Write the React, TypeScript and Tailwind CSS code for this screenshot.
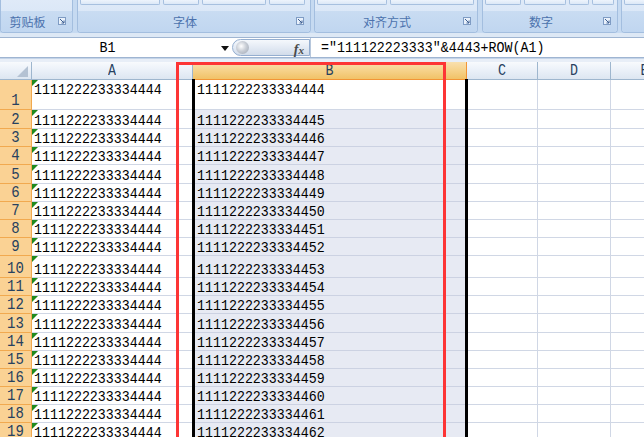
import React from "react";

const rowHeights = [30, 19, 18, 18, 19, 18, 18, 18, 18, 22, 18, 18, 19, 18, 18, 18, 18, 18, 18];

function Launcher() {
  return (
    <svg width="8" height="8" viewBox="0 0 8 8" className="shrink-0">
      <rect x="0.5" y="0.5" width="7" height="7" fill="#e9f1fb" stroke="#7f9cc4" />
      <path d="M2 2 L6 6 M6 3.5 L6 6 L3.5 6" stroke="#3c5f92" strokeWidth="1" fill="none" />
    </svg>
  );
}

function Btn({ w }: { w: number }) {
  return (
    <div
      className="h-[5px] rounded-b-[2px] border-x border-b border-[#a7c0df] bg-gradient-to-b from-[#eef4fc] to-[#dce8f7]"
      style={{ width: w }}
    />
  );
}

function Group({
  className,
  label,
  buttons,
}: {
  className: string;
  label: string;
  buttons: number[];
}) {
  return (
    <div className={"flex h-[33px] shrink-0 flex-col rounded-b-[4px] border-x border-b border-[#a3bedf] bg-gradient-to-b from-[#dfeaf8] to-[#d5e4f6] " + className}>
      <div className="flex h-[11px] gap-[3px] px-[2px]">
        {buttons.map((w, i) => (
          <Btn key={i} w={w} />
        ))}
      </div>
      <div className="relative flex flex-1 items-center justify-center rounded-b-[3px] bg-gradient-to-b from-[#c9dcf2] to-[#c0d6f0] pr-[18px]">
        <span className="font-['Noto_Sans_CJK_SC',sans-serif] text-[12px] leading-none text-[#4b72ad]">{label}</span>
        <div className="absolute right-[6px] top-[6px]">
          <Launcher />
        </div>
      </div>
    </div>
  );
}

function Ribbon() {
  return (
    <div className="flex h-[33px] bg-[#c6daf1]">
      <Group className="w-[73px]" label="剪贴板" buttons={[]} />
      <Group className="ml-[4px] w-[234px]" label="字体" buttons={[80, 36, 64, 36]} />
      <Group className="ml-[3px] w-[164px]" label="对齐方式" buttons={[70, 84]} />
      <Group className="ml-[4px] w-[136px]" label="数字" buttons={[36, 42, 20, 22]} />
      <Group className="ml-[3px] w-[60px]" label="" buttons={[40]} />
    </div>
  );
}

function FormulaBar() {
  return (
    <div className="flex h-[21px] border-y border-[#9fb5d2] bg-white">
      <div className="flex w-[232px] shrink-0 items-center">
        <div className="flex w-[215px] justify-center text-[13.3px] leading-[13px] text-black">
          <span className="inline-block scale-y-115">B1</span>
        </div>
        <svg width="8" height="5" viewBox="0 0 8 5" className="ml-[6px] mt-[1px]">
          <path d="M0 0 L8 0 L4 5 Z" fill="#111" />
        </svg>
      </div>
      <div className="relative my-[1px] flex w-[78px] shrink-0 items-center rounded-l-full border border-[#94aed0] bg-gradient-to-b from-[#f5f8fc] via-[#e3eaf4] to-[#d2dcea]">
        <div className="ml-[3px] h-[13px] w-[13px] rounded-full bg-[radial-gradient(circle_at_40%_40%,#ffffff_0%,#c9ced6_45%,#9aa3b0_100%)]" />
        <span className="absolute right-[5px] top-[-1px] font-['Liberation_Serif',serif] text-[14px] font-bold italic text-[#4a4a4a]">
          f<span className="text-[11px]">x</span>
        </span>
      </div>
      <div className="flex flex-1 items-center border-l border-[#b7c7dc] pl-[10px] text-[13.3px] leading-[13px] text-black">
        <span className="inline-block scale-y-115 whitespace-pre">="111122223333"&4443+ROW(A1)</span>
      </div>
    </div>
  );
}

function HeaderRow() {
  const normal =
    "flex shrink-0 items-center justify-center border-r border-b border-[#9eb6ce] bg-gradient-to-b from-[#f8fafd] via-[#eaf0f8] to-[#dde6f1] text-[#27415f]";
  return (
    <div className="flex h-[18px]">
      <div className={"relative w-[32px] " + normal}>
        <svg width="11" height="11" viewBox="0 0 11 11" className="absolute right-[3px] bottom-[2px]">
          <path d="M11 0 L11 11 L0 11 Z" fill="#b4c2d3" />
        </svg>
      </div>
      <div className={"w-[161px] " + normal}>
        <span className="inline-block scale-y-120 text-[13.3px] leading-[13px]">A</span>
      </div>
      <div className="flex w-[274px] shrink-0 items-center justify-center border-r border-b border-[#f29536] bg-gradient-to-b from-[#f9e0ae] via-[#f6d28a] to-[#f1c266] text-[#27415f]">
        <span className="inline-block scale-y-120 text-[13.3px] leading-[13px]">B</span>
      </div>
      <div className={"w-[71px] " + normal}>
        <span className="inline-block scale-y-120 text-[13.3px] leading-[13px]">C</span>
      </div>
      <div className={"w-[73px] " + normal}>
        <span className="inline-block scale-y-120 text-[13.3px] leading-[13px]">D</span>
      </div>
      <div className={"w-[68px] " + normal}>
        <span className="inline-block scale-y-120 text-[13.3px] leading-[13px]">E</span>
      </div>
    </div>
  );
}

function DataRow({ h, idx }: { h: number; idx: number }) {
  const first = idx === 0;
  const align = first ? "items-start pt-[4px]" : "items-end";
  const bVal = (1111222233334444 + idx).toString();
  return (
    <div className="flex" style={{ height: h }}>
      <div className="flex w-[32px] shrink-0 items-end justify-center border-r border-b border-[#f1a94f] bg-[#fad294] text-[#27415f]">
        <span className="inline-block origin-bottom scale-y-120 text-[14px] leading-[14px]">{idx + 1}</span>
      </div>
      <div className={"relative flex w-[161px] shrink-0 border-r border-b border-[#d0d7e5] pl-[2px] text-black " + align}>
        <svg width="6" height="6" viewBox="0 0 6 6" className="absolute left-0 top-0">
          <path d="M0 0 L6 0 L0 6 Z" fill="#1f8a1f" />
        </svg>
        <span className="inline-block origin-bottom scale-y-115 text-[13.3px] leading-[13px]">1111222233334444</span>
      </div>
      <div
        className={
          "flex w-[274px] shrink-0 border-r border-b pl-[4px] text-black " +
          align +
          (first ? " border-[#d0d7e5] bg-white" : " border-[#ccd2e2] bg-[#e7eaf3]")
        }
      >
        <span className="inline-block origin-bottom scale-y-115 text-[13.3px] leading-[13px]">{bVal}</span>
      </div>
      <div className="w-[71px] shrink-0 border-r border-b border-[#d0d7e5]" />
      <div className="w-[73px] shrink-0 border-r border-b border-[#d0d7e5]" />
      <div className="w-[68px] shrink-0 border-r border-b border-[#d0d7e5]" />
    </div>
  );
}

export default function App() {
  return (
    <div className="relative h-[437px] w-[644px] overflow-hidden bg-white font-['Liberation_Mono',monospace]">
      <Ribbon />
      <div className="h-[4px] bg-[#dde8f5]" />
      <FormulaBar />
      <div className="h-[4px] border-t border-[#c4d4e8] bg-[#e8eef7]" />
      <div className="flex flex-col">
        <HeaderRow />
        {rowHeights.map((h, i) => (
          <DataRow key={i} h={h} idx={i} />
        ))}
      </div>
      <div className="pointer-events-none absolute left-[192px] top-[79px] h-[380px] w-[276px] border-x-[3px] border-black" />
      <div className="pointer-events-none absolute left-[176px] top-[62px] h-[400px] w-[270px] border-[3px] border-[#fd3535]" />
    </div>
  );
}
